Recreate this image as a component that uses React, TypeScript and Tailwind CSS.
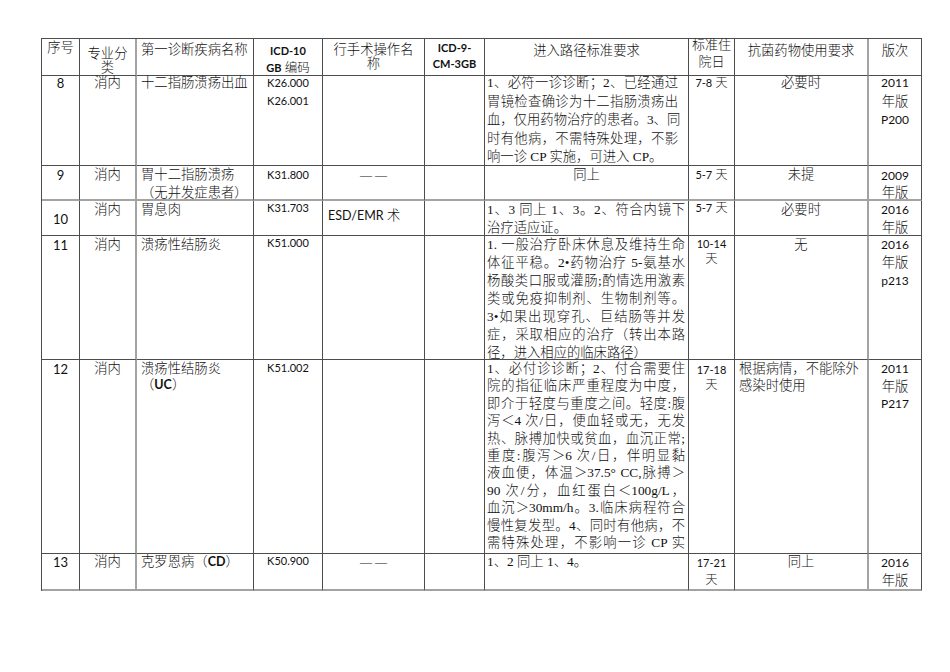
import React from "react";

const SERIF = "font-['Liberation_Serif','Noto_Sans_CJK_SC',serif]";
const LATO = "font-['Lato','Noto_Sans_CJK_SC',sans-serif]";

function Cell({
  row,
  col,
  className = "",
  children,
}: {
  row: number;
  col: number;
  className?: string;
  children?: React.ReactNode;
}) {
  const rc =
    col === 1 || col === 8
      ? "border-r-2 border-r-[#a3a3a3]"
      : "border-r border-r-[#4d4d4d]";
  const bc =
    row === 2 || row === 6
      ? "border-b-2 border-b-[#a3a3a3]"
      : "border-b border-b-[#4d4d4d]";
  return (
    <div className={`${rc} ${bc} min-w-0 overflow-visible ${className}`}>
      {children}
    </div>
  );
}

function L({ children, last }: { children: React.ReactNode; last?: boolean }) {
  return (
    <div
      className={
        last
          ? "whitespace-nowrap"
          : "whitespace-nowrap text-justify [text-align-last:justify]"
      }
    >
      {children}
    </div>
  );
}

function N({ children, cls = "text-[11px]" }: { children: React.ReactNode; cls?: string }) {
  return <span className={`${LATO} font-normal ${cls}`}>{children}</span>;
}

function Edition({ lines, lead }: { lines: string[]; lead: string }) {
  return (
    <div className={`text-center ${lead}`}>
      {lines.map((t, i) =>
        /[0-9]/.test(t) ? (
          <div key={i} className={`${LATO} font-normal text-[12px]`}>
            {t}
          </div>
        ) : (
          <div key={i}>{t}</div>
        )
      )}
    </div>
  );
}

export default function App() {
  return (
    <div
      className={`w-[950px] h-[672px] bg-white pt-[38px] pl-[41px] text-[#111] text-[13.33px] font-light ${SERIF}`}
    >
      <div className="grid w-fit grid-cols-[38px_57px_117px_69px_102px_60px_204px_46px_134px_53px] grid-rows-[37px_90px_35px_35px_124px_194px_37px] border-l border-t border-[#4d4d4d]">
        {/* Header */}
        <Cell row={0} col={0} className="text-center leading-[18px]">序号</Cell>
        <Cell row={0} col={1} className="text-center leading-[14px] pt-[8px]">
          专业分
          <br />类
        </Cell>
        <Cell row={0} col={2} className="pl-[4px] pt-[2px] leading-[18px] whitespace-nowrap">
          第一诊断疾病名称
        </Cell>
        <Cell row={0} col={3} className="text-center pt-[3px] leading-[17px]">
          <div className={`${LATO} font-bold text-[11px]`}>ICD-10</div>
          <div>
            <span className={`${LATO} font-bold text-[11px]`}>GB</span>{" "}
            <span className="text-[12.5px]">编码</span>
          </div>
        </Cell>
        <Cell row={0} col={4} className="text-center pt-[4px] leading-[14px]">
          行手术操作名
          <br />称
        </Cell>
        <Cell row={0} col={5} className={`text-center pt-[1px] leading-[16px] ${LATO} font-bold text-[11px]`}>
          ICD-9-
          <br />
          CM-3GB
        </Cell>
        <Cell row={0} col={6} className="text-center pt-[3px] leading-[18px]">进入路径标准要求</Cell>
        <Cell row={0} col={7} className="text-center text-[13px]">
          <div className="-mt-[3px] leading-[17px]">
            标准住
            <br />
            院日
          </div>
        </Cell>
        <Cell row={0} col={8} className="text-center pt-[3px] leading-[18px]">抗菌药物使用要求</Cell>
        <Cell row={0} col={9} className="text-center pt-[3px] leading-[18px]">版次</Cell>

        {/* Row 8 */}
        <Cell row={1} col={0} className={`text-center leading-[14px] ${LATO} font-normal text-[13px]`}>8</Cell>
        <Cell row={1} col={1} className="text-center leading-[14px]">消内</Cell>
        <Cell row={1} col={2} className="pl-[4px] leading-[14px] whitespace-nowrap">十二指肠溃疡出血</Cell>
        <Cell row={1} col={3} className={`text-center ${LATO} font-normal text-[11px]`}>
          <div className="-mt-[2px] leading-[18px]">
            K26.000
            <br />
            K26.001
          </div>
        </Cell>
        <Cell row={1} col={4} />
        <Cell row={1} col={5} />
        <Cell row={1} col={6} className="pl-[2px] pr-[10px]">
          <div className="-mt-[2px] leading-[18.6px]">
            <L>1、必符一诊诊断；2、已经通过</L>
            <L>胃镜检查确诊为十二指肠溃疡出</L>
            <L>血，仅用药物治疗的患者。3、同</L>
            <L>时有他病，不需特殊处理，不影</L>
            <L last>响一诊 CP 实施，可进入 CP。</L>
          </div>
        </Cell>
        <Cell row={1} col={7} className="text-center leading-[14px] whitespace-nowrap">
          <N>7-8</N> <span className="text-[12px]">天</span>
        </Cell>
        <Cell row={1} col={8} className="text-center leading-[14px]">必要时</Cell>
        <Cell row={1} col={9}>
          <div className="-mt-[2px]">
            <Edition lines={["2011", "年版", "P200"]} lead="leading-[18.5px]" />
          </div>
        </Cell>

        {/* Row 9 */}
        <Cell row={2} col={0} className={`text-center leading-[18px] ${LATO} font-normal text-[13px]`}>9</Cell>
        <Cell row={2} col={1} className="text-center leading-[18px]">消内</Cell>
        <Cell row={2} col={2} className="pl-[4px] leading-[18px] whitespace-nowrap">
          胃十二指肠溃疡
          <br />
          （无并发症患者）
        </Cell>
        <Cell row={2} col={3} className={`text-center leading-[18px] ${LATO} font-normal text-[11px]`}>K31.800</Cell>
        <Cell row={2} col={4} className="text-center leading-[18px] text-[12px] tracking-[3px] pl-[3px]">——</Cell>
        <Cell row={2} col={5} />
        <Cell row={2} col={6} className="text-center leading-[18px]">同上</Cell>
        <Cell row={2} col={7} className="text-center leading-[18px] whitespace-nowrap">
          <N>5-7</N> <span className="text-[12px]">天</span>
        </Cell>
        <Cell row={2} col={8} className="text-center leading-[18px]">未提</Cell>
        <Cell row={2} col={9} className="pt-[1px]">
          <Edition lines={["2009", "年版"]} lead="leading-[17px]" />
        </Cell>

        {/* Row 10 */}
        <Cell row={3} col={0} className={`text-center pt-[9px] leading-[18px] ${LATO} font-normal text-[13px]`}>10</Cell>
        <Cell row={3} col={1} className="text-center leading-[18px]">消内</Cell>
        <Cell row={3} col={2} className="pl-[4px] leading-[18px]">胃息肉</Cell>
        <Cell row={3} col={3} className={`text-center leading-[14px] ${LATO} font-normal text-[11px]`}>K31.703</Cell>
        <Cell row={3} col={4} className="pl-[5px] pt-[6px] leading-[18px] whitespace-nowrap">
          <span className={`${LATO} font-normal text-[12.5px]`}>ESD/EMR</span> 术
        </Cell>
        <Cell row={3} col={5} />
        <Cell row={3} col={6} className="pl-[2px] pr-[3px] leading-[18px]">
          <L>1、3 同上 1、3。2、符合内镜下</L>
          <L last>治疗适应证。</L>
        </Cell>
        <Cell row={3} col={7} className="text-center leading-[14px] whitespace-nowrap">
          <N>5-7</N> <span className="text-[12px]">天</span>
        </Cell>
        <Cell row={3} col={8} className="text-center leading-[18px]">必要时</Cell>
        <Cell row={3} col={9}>
          <Edition lines={["2016", "年版"]} lead="leading-[18px]" />
        </Cell>

        {/* Row 11 */}
        <Cell row={4} col={0} className={`text-center leading-[18px] ${LATO} font-normal text-[13px]`}>11</Cell>
        <Cell row={4} col={1} className="text-center leading-[18px]">消内</Cell>
        <Cell row={4} col={2} className="pl-[4px] leading-[18px]">溃疡性结肠炎</Cell>
        <Cell row={4} col={3} className={`text-center leading-[14px] ${LATO} font-normal text-[11px]`}>K51.000</Cell>
        <Cell row={4} col={4} />
        <Cell row={4} col={5} />
        <Cell row={4} col={6} className="pl-[2px] pr-[3px] leading-[18px]">
          <L>1. 一般治疗卧床休息及维持生命</L>
          <L>体征平稳。2•药物治疗 5-氨基水</L>
          <L>杨酸类口服或灌肠;酌情选用激素</L>
          <L>类或免疫抑制剂、生物制剂等。</L>
          <L>3•如果出现穿孔、巨结肠等并发</L>
          <L>症，采取相应的治疗（转出本路</L>
          <L last>径，进入相应的临床路径）</L>
        </Cell>
        <Cell row={4} col={7} className="text-center leading-[15px]">
          <N>10-14</N>
          <br />
          <span className="text-[12px]">天</span>
        </Cell>
        <Cell row={4} col={8} className="text-center leading-[18px]">无</Cell>
        <Cell row={4} col={9}>
          <Edition lines={["2016", "年版", "p213"]} lead="leading-[18px]" />
        </Cell>

        {/* Row 12 */}
        <Cell row={5} col={0} className={`text-center leading-[18px] ${LATO} font-normal text-[13px]`}>12</Cell>
        <Cell row={5} col={1} className="text-center leading-[18px]">消内</Cell>
        <Cell row={5} col={2} className="pl-[4px] pt-[1px] leading-[16px]">
          溃疡性结肠炎
          <br />
          （<span className={`${LATO} font-bold text-[12.5px]`}>UC</span>）
        </Cell>
        <Cell row={5} col={3} className={`text-center leading-[16px] ${LATO} font-normal text-[11px]`}>K51.002</Cell>
        <Cell row={5} col={4} />
        <Cell row={5} col={5} />
        <Cell row={5} col={6} className="pl-[2px] pr-[3px] leading-[17.4px] overflow-hidden">
          <L>1、必付诊诊断；2、付合需要住</L>
          <L>院的指征临床严重程度为中度，</L>
          <L>即介于轻度与重度之间。轻度:腹</L>
          <L>泻＜4 次/日，便血轻或无，无发</L>
          <L>热、脉搏加快或贫血，血沉正常;</L>
          <L>重度:腹泻＞6 次/日，伴明显黏</L>
          <L>液血便，体温＞37.5° CC,脉搏＞</L>
          <L>90 次/分，血红蛋白＜100g/L，</L>
          <L>血沉＞30mm/h。3.临床病程符合</L>
          <L>慢性复发型。4、同时有他病，不</L>
          <L>需特殊处理，不影响一诊 CP 实</L>
        </Cell>
        <Cell row={5} col={7} className="text-center pt-[1.5px] leading-[15px]">
          <N>17-18</N>
          <br />
          <span className="text-[12px]">天</span>
        </Cell>
        <Cell row={5} col={8} className="pl-[4px] leading-[17px]">
          根据病情，不能除外
          <br />
          感染时使用
        </Cell>
        <Cell row={5} col={9}>
          <Edition lines={["2011", "年版", "P217"]} lead="leading-[17.5px]" />
        </Cell>

        {/* Row 13 */}
        <Cell row={6} col={0} className={`text-center leading-[16px] ${LATO} font-normal text-[13px]`}>13</Cell>
        <Cell row={6} col={1} className="text-center leading-[16px]">消内</Cell>
        <Cell row={6} col={2} className="pl-[4px] leading-[16px] whitespace-nowrap">
          克罗恩病（<span className={`${LATO} font-bold text-[12.5px]`}>CD</span>）
        </Cell>
        <Cell row={6} col={3} className={`text-center leading-[14px] ${LATO} font-normal text-[11px]`}>K50.900</Cell>
        <Cell row={6} col={4} className="text-center leading-[16px] text-[12px] tracking-[3px] pl-[3px]">——</Cell>
        <Cell row={6} col={5} />
        <Cell row={6} col={6} className="pl-[2px] leading-[16px]">1、2 同上 1、4。</Cell>
        <Cell row={6} col={7} className="text-center leading-[17px]">
          <N>17-21</N>
          <br />
          <span className="text-[12px]">天</span>
        </Cell>
        <Cell row={6} col={8} className="text-center leading-[16px]">同上</Cell>
        <Cell row={6} col={9}>
          <Edition lines={["2016", "年版"]} lead="leading-[18px]" />
        </Cell>
      </div>
    </div>
  );
}
